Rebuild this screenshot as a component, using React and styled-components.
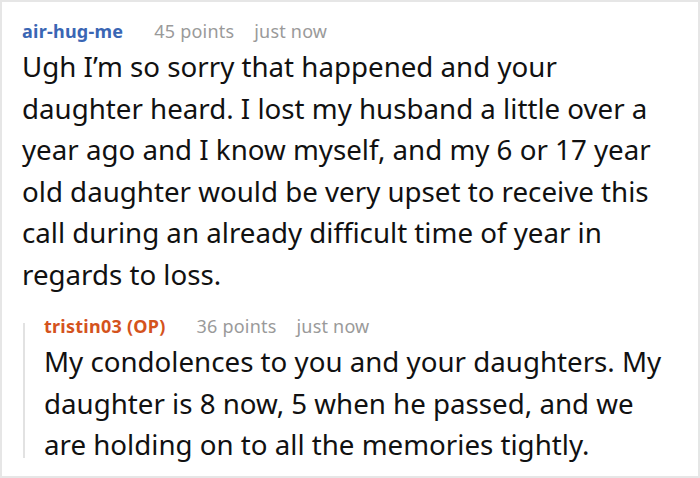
import React from 'react';
import styled, { createGlobalStyle } from 'styled-components';

const GlobalStyle = createGlobalStyle`
    html, body {
        margin: 0;
        padding: 0;
        background: #ffffff;
    }
    body {
        font-family: "Noto Sans", "Open Sans", sans-serif;
    }
`

const Frame = styled.div`
    box-sizing: border-box;
    width: 700px;
    height: 478px;
    border: 2px solid #e6e6e6;
    padding: 16px 10px 0 20px;
    overflow: hidden;
`
const Comment = styled.div`
    display: flex;
    flex-direction: column;
`
const Header = styled.div`
    display: flex;
    align-items: baseline;
    font-size: 18px;
    line-height: 26px;
    white-space: nowrap;
`
const Author = styled.span`
    font-weight: bold;
    color: ${props => props.color};
    letter-spacing: 0.25px;
    margin-right: 31px;
`
const Meta = styled.span`
    color: #9a9a9a;
    letter-spacing: 0.2px;
    margin-right: 20px;
`
const Body = styled.p`
    margin: ${props => props.top}px 0 0 0;
    font-size: 27.7px;
    line-height: 41.5px;
    color: #111111;
    white-space: nowrap;
`
const Reply = styled.div`
    position: relative;
    display: flex;
    flex-direction: column;
    margin-top: 18px;
    padding-left: 22px;

    &::before {
        content: "";
        position: absolute;
        left: 1px;
        top: 10px;
        bottom: 8px;
        width: 2px;
        background: #e2e2e2;
    }
`

const primeiro = [
    'Ugh I’m so sorry that happened and your',
    'daughter heard. I lost my husband a little over a',
    'year ago and I know myself, and my 6 or 17 year',
    'old daughter would be very upset to receive this',
    'call during an already difficult time of year in',
    'regards to loss.',
]

const resposta = [
    'My condolences to you and your daughters. My',
    'daughter is 8 now, 5 when he passed, and we',
    'are holding on to all the memories tightly.',
]

const linhas = (lista) => lista.map((l, i) => (
    <React.Fragment key={i}>{l}{i < lista.length - 1 && <br />}</React.Fragment>
))

export default function App() {
    return (
        <>
            <GlobalStyle />
            <Frame>
                <Comment>
                    <Header>
                        <Author color="#3a66b4">air-hug-me</Author>
                        <Meta>45 points</Meta>
                        <Meta>just now</Meta>
                    </Header>
                    <Body top={2}>{linhas(primeiro)}</Body>
                    <Reply>
                        <Header>
                            <Author color="#d4531d">tristin03 (OP)</Author>
                            <Meta>36 points</Meta>
                            <Meta>just now</Meta>
                        </Header>
                        <Body top={2}>{linhas(resposta)}</Body>
                    </Reply>
                </Comment>
            </Frame>
        </>
    );
}
